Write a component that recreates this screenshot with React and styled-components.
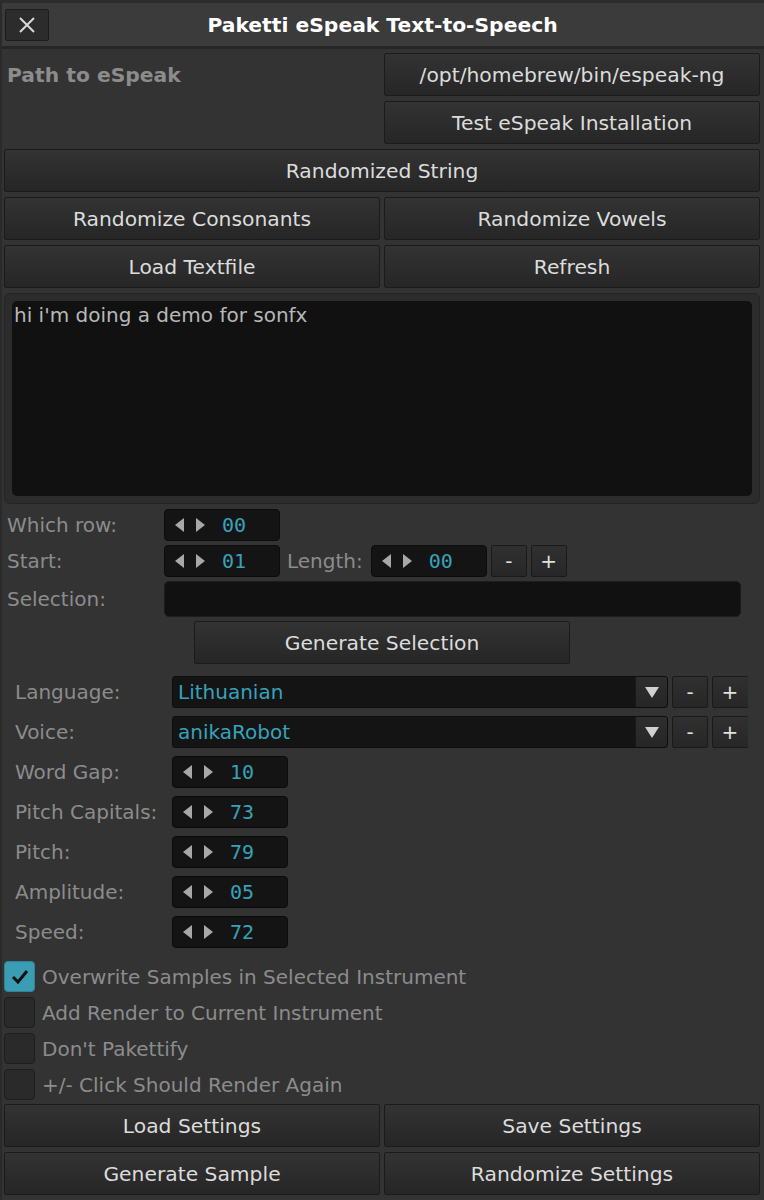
import React from 'react'
import styled, { createGlobalStyle } from 'styled-components'

const GlobalStyle = createGlobalStyle`
  html, body {
    margin: 0;
    padding: 0;
    background: #333333;
  }
  * {
    box-sizing: border-box;
  }
`

const UI_FONT = `"DejaVu Sans", "Liberation Sans", sans-serif`
const MONO_FONT = `"DejaVu Sans Mono", "Liberation Mono", monospace`

const App = () => {
  return (
    <>
      <GlobalStyle />
      <Window>
        <TitleBar>
          <CloseButton aria-label="Close">
            <svg width="20" height="20" viewBox="0 0 20 20">
              <path d="M3 3 L17 17 M17 3 L3 17" stroke="#d8d8d8" strokeWidth="2" fill="none" />
            </svg>
          </CloseButton>
          <Title>Paketti eSpeak Text-to-Speech</Title>
          <span />
        </TitleBar>

        <Body>
          <PathRow>
            <PathLabel>Path to eSpeak</PathLabel>
            <Stack>
              <Button>/opt/homebrew/bin/espeak-ng</Button>
              <Button>Test eSpeak Installation</Button>
            </Stack>
          </PathRow>

          <Button>Randomized String</Button>
          <Pair>
            <Button>Randomize Consonants</Button>
            <Button>Randomize Vowels</Button>
          </Pair>
          <Pair>
            <Button>Load Textfile</Button>
            <Button>Refresh</Button>
          </Pair>

          <TextPanel>
            <TextBox>hi i'm doing a demo for sonfx</TextBox>
          </TextPanel>

          <Fields>
            <FieldRow>
              <Label>Which row:</Label>
              <ValueBox value="00" />
            </FieldRow>
            <FieldRow>
              <Label>Start:</Label>
              <ValueBox value="01" />
              <InlineLabel>Length:</InlineLabel>
              <ValueBox value="00" />
              <SmallButton>-</SmallButton>
              <SmallButton>+</SmallButton>
            </FieldRow>
            <FieldRow $tall>
              <Label>Selection:</Label>
              <TextInput />
            </FieldRow>
            <Centered>
              <Button $width={376}>Generate Selection</Button>
            </Centered>
          </Fields>

          <Settings>
            <SettingRow>
              <Label>Language:</Label>
              <Dropdown value="Lithuanian" />
              <SmallButton>-</SmallButton>
              <SmallButton $clipped>+</SmallButton>
            </SettingRow>
            <SettingRow>
              <Label>Voice:</Label>
              <Dropdown value="anikaRobot" />
              <SmallButton>-</SmallButton>
              <SmallButton $clipped>+</SmallButton>
            </SettingRow>
            <SettingRow>
              <Label>Word Gap:</Label>
              <ValueBox value="10" />
            </SettingRow>
            <SettingRow>
              <Label>Pitch Capitals:</Label>
              <ValueBox value="73" />
            </SettingRow>
            <SettingRow>
              <Label>Pitch:</Label>
              <ValueBox value="79" />
            </SettingRow>
            <SettingRow>
              <Label>Amplitude:</Label>
              <ValueBox value="05" />
            </SettingRow>
            <SettingRow>
              <Label>Speed:</Label>
              <ValueBox value="72" />
            </SettingRow>
          </Settings>

          <Checks>
            <Check checked label="Overwrite Samples in Selected Instrument" />
            <Check label="Add Render to Current Instrument" />
            <Check label="Don't Pakettify" />
            <Check label="+/- Click Should Render Again" />
          </Checks>

          <Pair>
            <Button>Load Settings</Button>
            <Button>Save Settings</Button>
          </Pair>
          <Pair>
            <Button>Generate Sample</Button>
            <Button>Randomize Settings</Button>
          </Pair>
        </Body>
      </Window>
    </>
  )
}

const ValueBox = ({ value }) => (
  <Valuebox>
    <Arrows>
      <svg width="34" height="14" viewBox="0 0 34 14">
        <polygon points="10,0 10,14 1,7" fill="#a8a8a8" />
        <polygon points="22,0 22,14 31,7" fill="#a8a8a8" />
      </svg>
    </Arrows>
    <Value>{value}</Value>
  </Valuebox>
)

const Dropdown = ({ value }) => (
  <Popup>
    <PopupText>{value}</PopupText>
    <PopupArrow>
      <svg width="14" height="12" viewBox="0 0 14 12">
        <polygon points="0,1 14,1 7,12" fill="#d0d0d0" />
      </svg>
    </PopupArrow>
  </Popup>
)

const Check = ({ checked, label }) => (
  <CheckRow>
    <CheckBox $checked={checked}>
      {checked && (
        <svg width="22" height="22" viewBox="0 0 22 22">
          <path d="M4 11 L9 16 L18 5" stroke="#111" strokeWidth="3" fill="none" />
        </svg>
      )}
    </CheckBox>
    <CheckLabel>{label}</CheckLabel>
  </CheckRow>
)

export default App

const Window = styled.div`
  width: 764px;
  height: 1200px;
  background: #333333;
  border-left: 2px solid #2a2a2a;
  font-family: ${UI_FONT};
  overflow: hidden;
`
const TitleBar = styled.div`
  display: grid;
  grid-template-columns: 44px 1fr 44px;
  align-items: center;
  height: 49px;
  padding: 0 4px 0 3px;
  background: #3b3b3b;
  border-top: 3px solid #2c2c2c;
  border-bottom: 3px solid #262626;
`
const CloseButton = styled.button`
  display: flex;
  align-items: center;
  justify-content: center;
  width: 44px;
  height: 32px;
  padding: 0;
  background: #2c2c2c;
  border: 1px solid #1c1c1c;
  border-radius: 2px;
`
const Title = styled.div`
  text-align: center;
  color: #ffffff;
  font-size: 20.3px;
  font-weight: bold;
`
const Body = styled.div`
  display: flex;
  flex-direction: column;
  gap: 5px;
  padding: 4px 4px 0 2px;
`
const PathRow = styled.div`
  display: grid;
  grid-template-columns: 1fr 376px;
  gap: 4px;
`
const PathLabel = styled.div`
  padding: 10px 0 0 3px;
  color: #8c8c8c;
  font-size: 20.3px;
  font-weight: bold;
`
const Stack = styled.div`
  display: flex;
  flex-direction: column;
  gap: 5px;
`
const Pair = styled.div`
  display: grid;
  grid-template-columns: 1fr 1fr;
  gap: 4px;
`
const Button = styled.button`
  width: ${p => (p.$width ? `${p.$width}px` : 'auto')};
  height: 43px;
  padding: 0;
  background: linear-gradient(#333333, #2d2d2d 45%, #262626);
  border: 1px solid #1b1b1b;
  border-radius: 2px;
  color: #dcdcdc;
  font-family: ${UI_FONT};
  font-size: 20.3px;
`
const TextPanel = styled.div`
  height: 211px;
  padding: 7px;
  background: #2c2c2c;
  border: 1px solid #242424;
  border-radius: 6px;
`
const TextBox = styled.div`
  height: 100%;
  padding: 1px 2px;
  background: #111111;
  border-radius: 5px;
  color: #b8b8b8;
  font-size: 20px;
  line-height: 26px;
`
const Fields = styled.div`
  display: flex;
  flex-direction: column;
  gap: 4px;
`
const FieldRow = styled.div`
  display: flex;
  align-items: center;
  gap: 4px;
  height: ${p => (p.$tall ? 36 : 32)}px;
  padding-left: 3px;
`
const Label = styled.div`
  flex: 0 0 153px;
  color: #8c8c8c;
  font-size: 20px;
`
const InlineLabel = styled.div`
  margin: 0 4px 0 3px;
  color: #8c8c8c;
  font-size: 20px;
`
const Valuebox = styled.div`
  display: flex;
  align-items: center;
  width: 116px;
  height: 32px;
  padding-left: 9px;
  background: #141414;
  border: 1px solid #0c0c0c;
  border-radius: 4px;
`
const Arrows = styled.div`
  display: flex;
  width: 48px;
`
const Value = styled.div`
  color: #38a2bb;
  font-family: ${MONO_FONT};
  font-size: 20px;
`
const SmallButton = styled.button`
  flex: 0 0 ${p => (p.$clipped ? 40 : 36)}px;
  height: 32px;
  padding: 0 ${p => (p.$clipped ? 4 : 0)}px 0 0;
  background: linear-gradient(#303030, #272727);
  border: 1px solid #1a1a1a;
  border-radius: 2px;
  color: #e0e0e0;
  font-family: ${UI_FONT};
  font-size: 20px;
`
const TextInput = styled.div`
  width: 577px;
  height: 36px;
  background: #111111;
  border: 1px solid #1d1d1d;
  border-radius: 5px;
`
const Centered = styled.div`
  display: flex;
  padding-left: 190px;
`
const Settings = styled.div`
  display: flex;
  flex-direction: column;
  gap: 8px;
  width: 744px;
  margin-top: 7px;
  padding-left: 11px;
  overflow: hidden;
`
const SettingRow = styled.div`
  display: flex;
  align-items: center;
  gap: 4px;
  height: 32px;
`
const Popup = styled.div`
  display: flex;
  flex: 0 0 496px;
  height: 32px;
  background: #141414;
  border: 1px solid #0e0e0e;
  border-radius: 3px;
  overflow: hidden;
`
const PopupText = styled.div`
  flex: 1;
  padding: 3px 5px;
  color: #38a2bb;
  font-size: 20px;
`
const PopupArrow = styled.div`
  display: flex;
  align-items: center;
  justify-content: center;
  width: 32px;
  background: linear-gradient(#2e2e2e, #262626);
  border-left: 1px solid #1a1a1a;
`
const Checks = styled.div`
  display: flex;
  flex-direction: column;
  gap: 5px;
  margin: 8px 0 -1px;
`
const CheckRow = styled.div`
  display: flex;
  align-items: center;
  gap: 7px;
  height: 31px;
`
const CheckBox = styled.div`
  display: flex;
  align-items: center;
  justify-content: center;
  width: 31px;
  height: 31px;
  background: ${p => (p.$checked ? '#3a9db4' : '#2a2a2a')};
  border: 1px solid ${p => (p.$checked ? '#2f8398' : '#1d1d1d')};
  border-radius: 4px;
`
const CheckLabel = styled.div`
  color: #8c8c8c;
  font-size: 20px;
`
